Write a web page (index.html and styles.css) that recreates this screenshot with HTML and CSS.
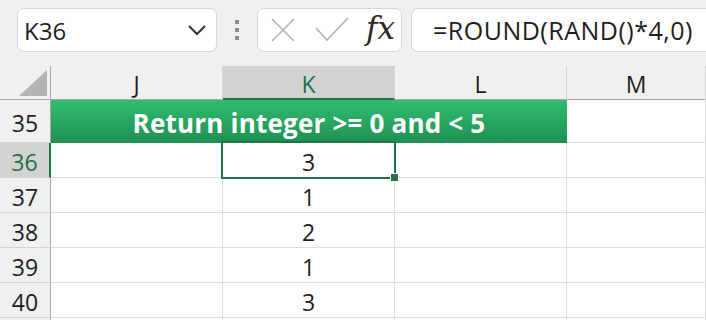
FILE: index.html
```html
<!DOCTYPE html>
<html lang="en">
<head>
    <meta charset="UTF-8">
    <title>RAND rounding</title>
    <link rel="stylesheet" href="styles.css">
</head>
<body>
    <div class="toolbar">
        <div class="namebox">
            <span>K36</span>
            <svg class="chevron" width="20" height="12" viewBox="0 0 20 12">
                <polyline points="2,2 10,10 18,2" fill="none" stroke="#333" stroke-width="2"/>
            </svg>
        </div>
        <div class="grip"><i></i><i></i><i></i></div>
        <div class="fxbtns">
            <svg width="26" height="26" viewBox="0 0 26 26">
                <path d="M2 2 L24 24 M24 2 L2 24" stroke="#b4b4b4" stroke-width="1.6" fill="none"/>
            </svg>
            <svg width="34" height="26" viewBox="0 0 34 26">
                <polyline points="1,11 12,23 33,1" fill="none" stroke="#b4b4b4" stroke-width="1.6"/>
            </svg>
            <span class="fx">fx</span>
        </div>
        <div class="formula">=ROUND(RAND()*4,0)</div>
    </div>

    <div class="sheet">
        <div class="corner">
            <svg width="28" height="26" viewBox="0 0 28 26"><polygon points="0,26 28,26 28,0" fill="#b4b4b4"/></svg>
        </div>
        <div class="colhead">J</div>
        <div class="colhead active">K</div>
        <div class="colhead">L</div>
        <div class="colhead">M</div>

        <div class="rowhead">35</div>
        <div class="title">Return integer &gt;= 0 and &lt; 5</div>
        <div class="cell"></div>

        <div class="rowhead active">36</div>
        <div class="cell"></div>
        <div class="cell selected">3</div>
        <div class="cell"></div>
        <div class="cell"></div>

        <div class="rowhead">37</div>
        <div class="cell"></div>
        <div class="cell">1</div>
        <div class="cell"></div>
        <div class="cell"></div>

        <div class="rowhead">38</div>
        <div class="cell"></div>
        <div class="cell">2</div>
        <div class="cell"></div>
        <div class="cell"></div>

        <div class="rowhead">39</div>
        <div class="cell"></div>
        <div class="cell">1</div>
        <div class="cell"></div>
        <div class="cell"></div>

        <div class="rowhead">40</div>
        <div class="cell"></div>
        <div class="cell">3</div>
        <div class="cell"></div>
        <div class="cell"></div>

        <div class="rowhead"></div>
        <div class="cell"></div>
        <div class="cell"></div>
        <div class="cell"></div>
        <div class="cell"></div>
    </div>
</body>
</html>
```

FILE: styles.css
```css
body {
    margin: 0;
    width: 706px;
    height: 320px;
    overflow: hidden;
    background: #f0f0f0;
    font-family: "Open Sans", "Noto Sans", sans-serif;
    color: #1e1e1e;
}
.toolbar {
    display: flex;
    align-items: flex-start;
    height: 66px;
    box-sizing: border-box;
    padding: 8px 0 0 17px;
}
.namebox {
    width: 200px;
    height: 44px;
    box-sizing: border-box;
    background: #fff;
    border: 1px solid #d6d6d6;
    border-radius: 7px;
    display: flex;
    align-items: center;
    justify-content: space-between;
    padding: 0 9px 0 6px;
    font-size: 24px;
}
.grip {
    display: flex;
    flex-direction: column;
    gap: 4px;
    margin: 12px 0 0 18px;
}
.grip i {
    display: block;
    width: 4px;
    height: 4px;
    background: #8c8c8c;
}
.fxbtns {
    width: 145px;
    height: 44px;
    box-sizing: border-box;
    margin-left: 18px;
    background: #fff;
    border: 1px solid #d6d6d6;
    border-radius: 7px;
    display: flex;
    align-items: center;
    gap: 19px;
    padding-left: 12px;
}
.fx {
    font-family: "DejaVu Serif", "Liberation Serif", serif;
    font-style: italic;
    font-size: 31px;
    color: #2a2a2a;
    margin-left: -2px;
    margin-top: -4px;
}
.formula {
    flex: 1;
    height: 44px;
    box-sizing: border-box;
    margin-left: 9px;
    background: #fff;
    border: 1px solid #d6d6d6;
    border-right: none;
    border-radius: 7px 0 0 7px;
    padding-left: 21px;
    display: flex;
    align-items: center;
    font-size: 25px;
    letter-spacing: 0.5px;
    white-space: nowrap;
    overflow: hidden;
}
.sheet {
    display: grid;
    grid-template-columns: 51px 172px 172px 172px 139px;
    grid-template-rows: 34px 43px repeat(5, 35px) 2px;
    background: #fff;
}
.sheet > div {
    box-sizing: border-box;
    display: flex;
    align-items: center;
    justify-content: center;
}
.corner {
    background: #f0f0f0;
    border-right: 1px solid #a8a8a8;
    border-bottom: 1px solid #a8a8a8;
    align-items: flex-end !important;
    justify-content: flex-end !important;
    padding: 0 3px 3px 0;
}
.colhead {
    background: #f0f0f0;
    border-right: 1px solid #d4d4d4;
    border-bottom: 1px solid #a8a8a8;
    font-size: 23px;
    padding-top: 3px;
}
.colhead.active {
    background: #d2d2d2;
    color: #217346;
    border-bottom: 2px solid #217346;
}
.rowhead {
    background: #f0f0f0;
    border-right: 1px solid #a8a8a8;
    border-bottom: 1px solid #d4d4d4;
    font-size: 23px;
    padding-top: 4px;
}
.rowhead.active {
    background: #d2d2d2;
    color: #217346;
    border-right: 2px solid #217346;
}
.title {
    grid-column: span 3;
    background: linear-gradient(#31bd70, #1f8f52);
    color: #fff;
    font-weight: bold;
    font-size: 26px;
    letter-spacing: 0.2px;
    padding-top: 2px;
}
.cell {
    border-right: 1px solid #dedede;
    border-bottom: 1px solid #dedede;
    font-size: 23px;
    padding-top: 4px;
}
.cell.selected {
    position: relative;
}
.cell.selected::before {
    content: "";
    position: absolute;
    left: -2px;
    top: -2px;
    right: -2px;
    bottom: -2px;
    border: 2px solid #217346;
}
.cell.selected::after {
    content: "";
    position: absolute;
    right: -4px;
    bottom: -4px;
    width: 7px;
    height: 7px;
    background: #217346;
    box-shadow: 0 0 0 1px #fff;
}
```
